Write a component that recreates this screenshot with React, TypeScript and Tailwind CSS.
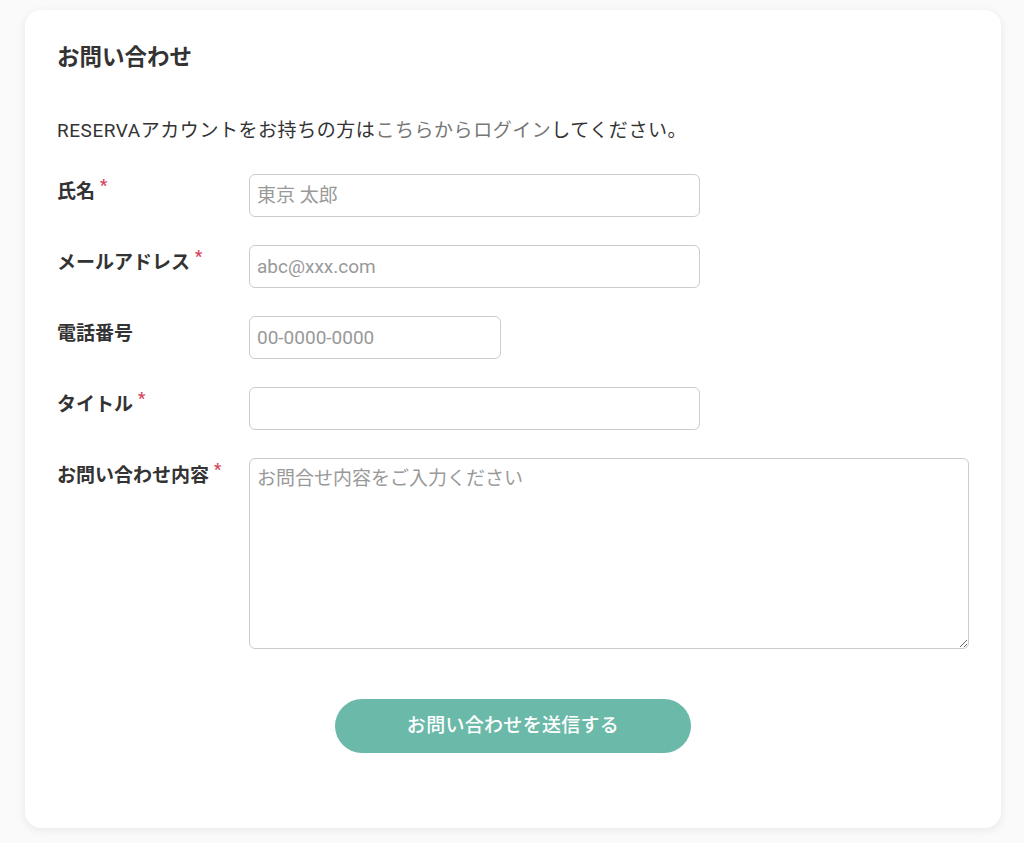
import React from 'react';

const fields = [
  { label: '氏名', required: true, placeholder: '東京 太郎', width: 'w-[451px]' },
  { label: 'メールアドレス', required: true, placeholder: 'abc@xxx.com', width: 'w-[451px]' },
  { label: '電話番号', required: false, placeholder: '00-0000-0000', width: 'w-[252px]' },
  { label: 'タイトル', required: true, placeholder: '', width: 'w-[451px]' },
];

const Label = ({ text, required }: { text: string; required: boolean }) => (
  <div className="w-[192px] shrink-0 pt-[4px] text-[19px] font-bold leading-[28px] text-[#333]">
    {text}
    {required && <span className="relative -top-[7px] ml-[5px] text-[16px] text-[#d6455c]">*</span>}
  </div>
);

const App = () => {
  return (
    <div
      className="min-h-[843px] bg-[#fafafa] pt-[10px] pl-[25px]"
      style={{ fontFamily: 'Roboto, "Noto Sans CJK JP", sans-serif' }}
    >
      <div className="w-[976px] h-[818px] rounded-[16px] bg-white px-[32px] pt-[33px] shadow-[0_2px_10px_rgba(0,0,0,0.08)]">
        <h1 className="text-[22.5px] font-bold leading-[28px] text-[#333]">お問い合わせ</h1>

        <p className="mt-[46px] text-[19px] leading-[28px] tracking-[0.55px] text-[#333]">
          RESERVAアカウントをお持ちの方は
          <a href="#" className="text-[#777]">こちらからログイン</a>
          してください。
        </p>

        <form className="mt-[29px] flex flex-col gap-[28px]">
          {fields.map((f) => (
            <div key={f.label} className="flex">
              <Label text={f.label} required={f.required} />
              <input
                type="text"
                placeholder={f.placeholder}
                className={`${f.width} h-[43px] rounded-[6px] border border-[#ccc] bg-white px-[7px] text-[19px] text-[#333] placeholder:text-[#999] outline-none`}
              />
            </div>
          ))}
          <div className="flex">
            <Label text="お問い合わせ内容" required={true} />
            <textarea
              placeholder="お問合せ内容をご入力ください"
              className="w-[721px] h-[191px] rounded-[6px] border border-[#ccc] bg-white px-[7px] py-[6px] text-[19px] leading-[28px] text-[#333] placeholder:text-[#999] outline-none"
            />
          </div>
        </form>

        <div className="mt-[50px] flex justify-center">
          <button
            type="button"
            className="w-[356px] h-[54px] rounded-full bg-[#6bb9a8] text-[19px] tracking-[0.3px] font-medium text-white"
          >
            お問い合わせを送信する
          </button>
        </div>
      </div>
    </div>
  );
};

export default App;
